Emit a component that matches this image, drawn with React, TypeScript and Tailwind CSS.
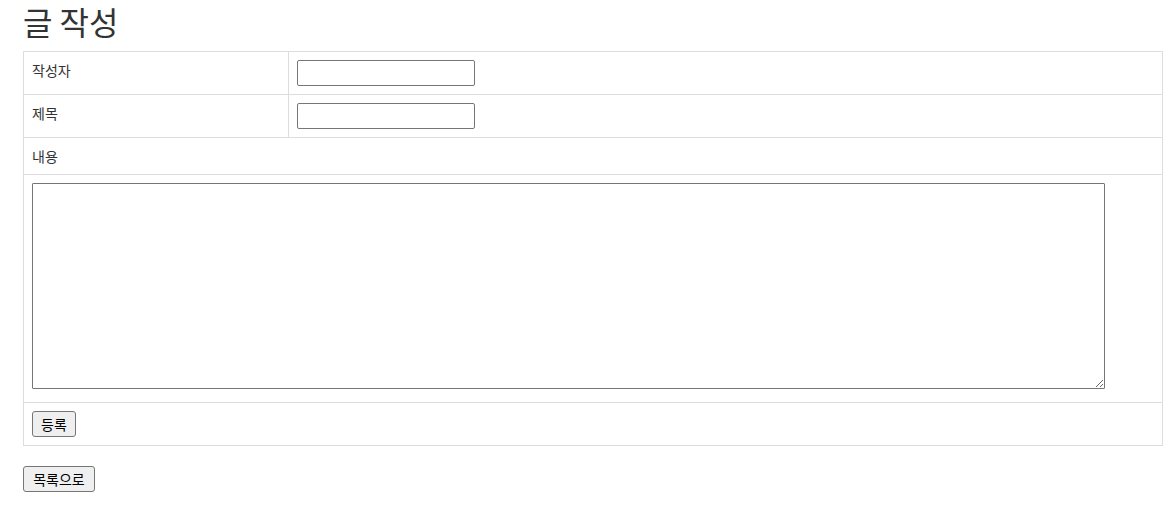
export default function App() {
  const font = "font-['Malgun_Gothic','Noto_Sans_CJK_KR',sans-serif]";
  const btn =
    "block h-[26px] px-0 text-[14px] leading-[24px] text-center bg-[#efefef] border border-[#767676] rounded-[3px] text-black";
  const input = "block w-[178px] h-[26px] border border-[#767676] rounded-[2px] px-1";
  return (
    <div className={`${font} text-[14px] leading-[20px] text-[#333] bg-white min-h-[512px] px-[23px]`}>
      <h2 className="text-[32px] leading-[40px] pt-[1px] pb-[10px] font-normal">글 작성</h2>
      <table className="w-[1140px] border-collapse border border-[#ddd]">
        <tbody>
          <tr>
            <td className="border border-[#ddd] p-2 align-top w-[265px]">작성자</td>
            <td className="border border-[#ddd] p-2 align-top">
              <input type="text" className={input} />
            </td>
          </tr>
          <tr>
            <td className="border border-[#ddd] p-2 align-top">제목</td>
            <td className="border border-[#ddd] p-2 align-top">
              <input type="text" className={input} />
            </td>
          </tr>
          <tr>
            <td colSpan={2} className="border border-[#ddd] p-2 align-top">내용</td>
          </tr>
          <tr>
            <td colSpan={2} className="border border-[#ddd] pt-2 px-2 pb-[13px] align-top">
              <textarea className="block w-[1073px] h-[206px] border border-[#767676] rounded-[1px] resize" />
            </td>
          </tr>
          <tr>
            <td colSpan={2} className="border border-[#ddd] p-2 align-top">
              <button className={`${btn} w-[44px]`}>등록</button>
            </td>
          </tr>
        </tbody>
      </table>
      <button className={`${btn} w-[72px] mt-[20px]`}>목록으로</button>
    </div>
  );
}
